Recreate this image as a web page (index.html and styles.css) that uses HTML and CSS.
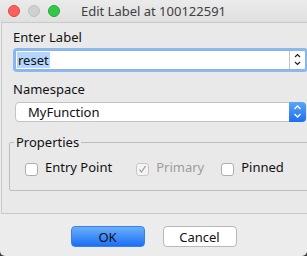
FILE: index.html
```html
<!DOCTYPE html>
<html>
<head>
    <title>Edit Label</title>
    <meta charset="UTF-8">
    <link rel="stylesheet" href="styles.css">
</head>
<body>
    <div class="window">
        <!-- 标题栏 -->
        <div class="titlebar">
            <div class="lights">
                <span class="light red"></span>
                <span class="light off"></span>
                <span class="light green"></span>
            </div>
            <div class="title">Edit Label at 100122591</div>
            <div></div>
        </div>

        <div class="panel">
            <div class="field-label">Enter Label</div>
            <div class="combo">
                <span class="combo-text"><span class="selected">reset</span></span>
                <span class="stepper">
                    <svg width="15" height="18" viewBox="0 0 15 18">
                        <polyline points="5,6 7.5,3.5 10,6" fill="none" stroke="#222" stroke-width="1.2"/>
                        <polyline points="5,11 7.5,13.5 10,11" fill="none" stroke="#222" stroke-width="1.2"/>
                    </svg>
                </span>
            </div>

            <div class="field-label second">Namespace</div>
            <div class="select">
                <span class="select-text">MyFunction</span>
                <span class="select-arrows">
                    <svg width="17" height="20" viewBox="0 0 17 20">
                        <polyline points="5.5,7 8.5,4 11.5,7" fill="none" stroke="#fff" stroke-width="1.4"/>
                        <polyline points="5.5,12 8.5,15 11.5,12" fill="none" stroke="#fff" stroke-width="1.4"/>
                    </svg>
                </span>
            </div>

            <fieldset class="group">
                <legend>Properties</legend>
                <div class="checks">
                    <label class="check first">
                        <span class="box"></span>
                        <span>Entry Point</span>
                    </label>
                    <label class="check middle disabled">
                        <span class="box">
                            <svg width="11" height="11" viewBox="0 0 11 11">
                                <polyline points="2.5,5.5 4.5,8 8.5,2" fill="none" stroke="#9a9a9a" stroke-width="1.2"/>
                            </svg>
                        </span>
                        <span>Primary</span>
                    </label>
                    <label class="check">
                        <span class="box"></span>
                        <span>Pinned</span>
                    </label>
                </div>
            </fieldset>
        </div>

        <div class="buttons">
            <button class="btn default">OK</button>
            <button class="btn">Cancel</button>
        </div>
    </div>
</body>
</html>
```

FILE: styles.css
```css
body {
    margin: 0;
    padding: 0;
    background: #3c3c3c;
    font-family: "Noto Sans", "DejaVu Sans", sans-serif;
    font-size: 13px;
    line-height: 16px;
    color: #111;
}

.window {
    width: 307px;
    height: 256px;
    background: #ececec;
    border-radius: 0 0 5px 5px;
    overflow: hidden;
    display: flex;
    flex-direction: column;
}

/* 标题栏 */
.titlebar {
    height: 22px;
    display: grid;
    grid-template-columns: 1fr auto 1fr;
    align-items: center;
    background: linear-gradient(#ebebeb, #e0e0e0);
}

.lights {
    display: flex;
    gap: 8px;
    padding-left: 8px;
}

.light {
    width: 10px;
    height: 10px;
    border-radius: 50%;
    border: 1px solid;
}

.light.red { background: #fc605c; border-color: #df4943; }
.light.off { background: #d0d0d0; border-color: #bfbfbf; }
.light.green { background: #34c84a; border-color: #26a934; }

.title {
    color: #404040;
}

.panel {
    margin-left: 1px;
    width: 302px;
    border: 1px solid #c9c9c9;
    background: #e9e9e9;
    padding: 6px 7px 22px 7px;
}

.field-label {
    padding-left: 4px;
    margin-bottom: 5px;
}

.field-label.second {
    margin-top: 11px;
}

.combo {
    margin: 0 5px 0 6px;
    height: 20px;
    box-sizing: border-box;
    border: 1px solid #8fb2e4;
    box-shadow: 0 0 0 2px #8cb8f2;
    border-radius: 2px;
    background: #fff;
    display: flex;
}

.combo-text {
    flex: 1;
    padding: 1px 0 0 1px;
}

.selected {
    display: inline-block;
    background: #b4d5fe;
    padding: 0 1px;
    line-height: 16px;
    height: 16px;
}

.stepper {
    width: 15px;
    border-left: 1px solid #c4c4c4;
    display: flex;
}

.select {
    margin: 0 5px 0 6px;
    height: 20px;
    box-sizing: border-box;
    border: 1px solid #c3c3c3;
    border-radius: 4px;
    background: #fff;
    display: flex;
    align-items: stretch;
}

.select-text {
    flex: 1;
    padding: 1px 0 0 12px;
}

.select-arrows {
    width: 17px;
    margin: -1px -1px -1px 0;
    border-radius: 0 4px 4px 0;
    background: linear-gradient(#5aa6f9, #1c6ff1);
    display: flex;
}

/* 属性分组 */
.group {
    margin: 12px 0 0 0;
    padding: 9px 0 14px 0;
    border: 1px solid #bdbdbd;
    border-radius: 2px;
    min-width: 0;
}

.group legend {
    margin-left: 4px;
    padding: 0 2px;
}

.checks {
    display: flex;
    align-items: flex-start;
    padding-left: 15px;
}

.check {
    display: flex;
    align-items: flex-start;
    flex-shrink: 0;
    white-space: nowrap;
    gap: 7px;
    margin-right: 24px;
}

.check.middle {
    margin-right: 17px;
}

.check .box {
    width: 13px;
    height: 13px;
    box-sizing: border-box;
    margin-top: 4px;
    border: 1px solid #adadad;
    border-radius: 3px;
    background: #fff;
    display: flex;
    align-items: center;
    justify-content: center;
}

.check.disabled {
    color: #9d9d9d;
}

.check.disabled .box {
    border-color: #c8c8c8;
    background: #f4f4f4;
}

/* 按钮 */
.buttons {
    display: flex;
    justify-content: center;
    gap: 18px;
    padding-top: 12px;
}

.btn {
    width: 74px;
    height: 21px;
    padding: 0;
    font-family: inherit;
    font-size: 13px;
    line-height: 16px;
    color: #111;
    background: #fff;
    border: 1px solid #b8b8b8;
    border-radius: 4px;
}

.btn.default {
    background: linear-gradient(#6bb0fb, #1a6ef6);
    border-color: #3b7fe6;
}
```
